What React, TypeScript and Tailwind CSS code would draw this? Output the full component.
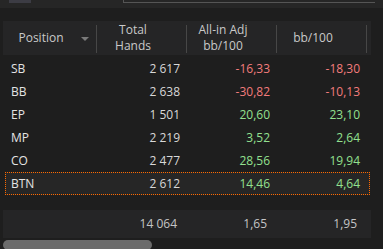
const rows = [
  { pos: 'SB', hands: '2\u00a0617', adj: '-16,33', bb: '-18,30' },
  { pos: 'BB', hands: '2\u00a0638', adj: '-30,82', bb: '-10,13' },
  { pos: 'EP', hands: '1\u00a0501', adj: '20,60', bb: '23,10' },
  { pos: 'MP', hands: '2\u00a0219', adj: '3,52', bb: '2,64' },
  { pos: 'CO', hands: '2\u00a0477', adj: '28,56', bb: '19,94' },
  { pos: 'BTN', hands: '2\u00a0612', adj: '14,46', bb: '4,64', selected: true },
]

function tone(v: string) {
  return v.startsWith('-') ? 'text-[#f27c7c]' : 'text-[#93e08f]'
}

function HeaderCell({ children, sort }: { children: React.ReactNode; sort?: boolean }) {
  return (
    <div className="relative flex items-center justify-center pr-[18px] text-center leading-[16px] text-[#c9c9c9]">
      <div>{children}</div>
      {sort && (
        <span className="absolute left-[78px] top-[16px] h-0 w-0 border-x-[4px] border-t-[4px] border-x-transparent border-t-[#7a7a7a]" />
      )}
      <span className="absolute right-0 top-[4px] bottom-[2px] w-px bg-[#474747]" />
    </div>
  )
}

export default function App() {
  return (
    <div className="h-[249px] w-[383px] overflow-hidden bg-[#1e1e1e] font-['Open_Sans',sans-serif] text-[12px]">
      <div className="flex h-[8px] bg-[#262626]">
        <div className="ml-[9px] h-[3px] w-[22px] bg-[#3c3c44]" />
        <div className="ml-[92px] h-[3px] w-[252px] border-b border-l border-[#555555]" />
      </div>

      <div className="ml-[3px] mt-[13px] w-[368px]">
        <div className="grid h-[34px] grid-cols-[94px_90px_90px_90px] bg-[#252526]">
          <HeaderCell sort>Position</HeaderCell>
          <HeaderCell>Total<br />Hands</HeaderCell>
          <HeaderCell>All-in Adj<br />bb/100</HeaderCell>
          <HeaderCell>bb/100</HeaderCell>
        </div>

        <div className="mt-[2px]">
          {rows.map((r) =>
            r.selected ? (
              <div
                key={r.pos}
                className="ml-[2px] mr-[1px] grid h-[23px] grid-cols-[91px_90px_90px_90px] items-center border border-dotted border-[#ff6a00] bg-[#262626]"
              >
                <span className="pl-[5px] text-[#e4e4e4]">{r.pos}</span>
                <span className="pr-[7px] text-right text-[#d8d8d8]">{r.hands}</span>
                <span className={'pr-[7px] text-right ' + tone(r.adj)}>{r.adj}</span>
                <span className={'pr-[7px] text-right ' + tone(r.bb)}>{r.bb}</span>
              </div>
            ) : (
              <div key={r.pos} className="grid h-[23px] grid-cols-[94px_90px_90px_90px] items-center">
                <span className="pl-[8px] text-[#e4e4e4]">{r.pos}</span>
                <span className="pr-[7px] text-right text-[#d8d8d8]">{r.hands}</span>
                <span className={'pr-[7px] text-right ' + tone(r.adj)}>{r.adj}</span>
                <span className={'pr-[7px] text-right ' + tone(r.bb)}>{r.bb}</span>
              </div>
            )
          )}
        </div>

        <div className="mt-[15px] grid h-[28px] grid-cols-[94px_90px_90px_90px] items-center bg-[#252526] text-[#c4c4c4]">
          <span />
          <span className="pr-[10px] text-right">{'14\u00a0064'}</span>
          <span className="pr-[10px] text-right">1,65</span>
          <span className="pr-[10px] text-right">1,95</span>
        </div>
      </div>

      <div className="ml-[3px] mt-[2px] h-[10px] w-[149px] rounded-full bg-[#6b6b6b]" />
    </div>
  )
}
